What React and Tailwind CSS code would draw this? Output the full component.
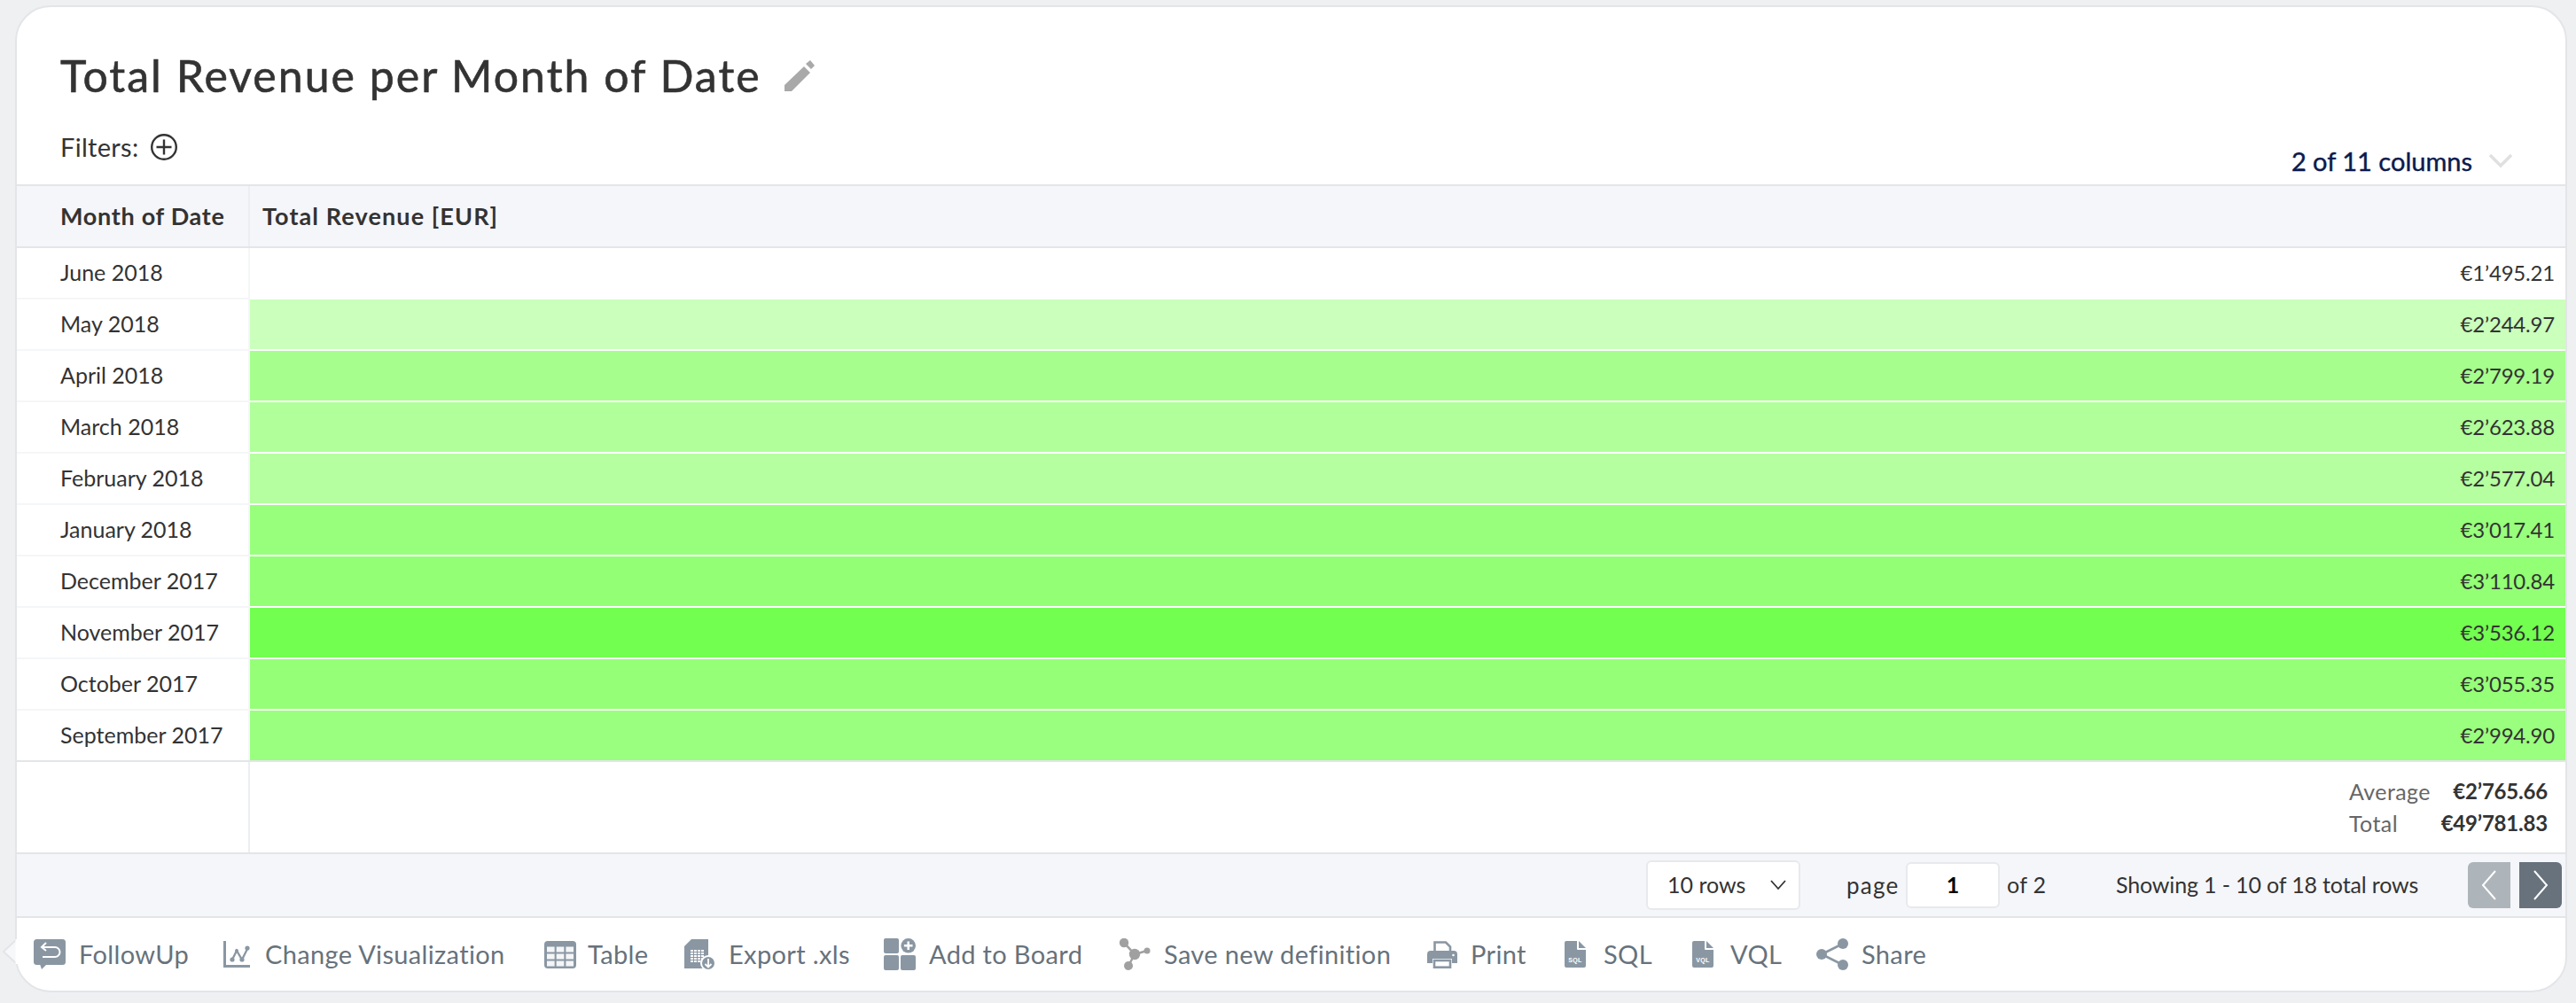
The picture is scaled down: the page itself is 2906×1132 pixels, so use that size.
import React from "react";

const rows = [
  ["June 2018", "€1’495.21", "bg-white"],
  ["May 2018", "€2’244.97", "bg-[#cbffbc]"],
  ["April 2018", "€2’799.19", "bg-[#a6ff8d]"],
  ["March 2018", "€2’623.88", "bg-[#b0ff9b]"],
  ["February 2018", "€2’577.04", "bg-[#b5ffa0]"],
  ["January 2018", "€3’017.41", "bg-[#98ff7c]"],
  ["December 2017", "€3’110.84", "bg-[#92ff75]"],
  ["November 2017", "€3’536.12", "bg-[#72ff50]"],
  ["October 2017", "€3’055.35", "bg-[#96ff78]"],
  ["September 2017", "€2’994.90", "bg-[#9aff7e]"],
];

const I = { fill: "#8a97a3" };

const fileIcon = (label) => (
  <svg width="24" height="30" viewBox="0 0 24 30">
    <path d="M2 0H14V9a1 1 0 0 0 1 1H24V28a2 2 0 0 1-2 2H2a2 2 0 0 1-2-2V2a2 2 0 0 1 2-2z" {...I} />
    <path d="M16 0l8 8h-8z" {...I} />
    <text x="12" y="23.500" textAnchor="middle" fontSize="7" fontWeight="700" fill="#fff" fontFamily="Liberation Sans, sans-serif">{label}</text>
  </svg>
);

const cells = [];
for (const y of [6.5, 14.5, 22.5]) for (const x of [3, 13.7, 24.4]) cells.push([x, y]);
const xls = [];
for (const y of [12, 15, 18, 21, 24]) for (const x of [7, 11, 15, 19]) xls.push([x, y]);

const tools = [
  ["FollowUp", "w-[214px] gap-[15px]",
    <svg width="36" height="34" viewBox="0 0 36 34">
      <rect width="36" height="29" rx="3.500" {...I} />
      <path d="M7 28h8l-6 6z" {...I} />
      <path d="M14 4L9 9l5 4M9 9h15a5.500 5.500 0 0 1 0 11H10" fill="none" stroke="#fff" strokeWidth="2" />
    </svg>],
  ["Change Visualization", "w-[362px] gap-[17px]",
    <svg width="30" height="30" viewBox="0 0 30 30">
      <path d="M1.500 0V28.500H30" fill="none" stroke="#8a97a3" strokeWidth="3" />
      <path d="M10 21l5-10 6 10 6-12" fill="none" stroke="#8a97a3" strokeWidth="2.300" />
      <circle cx="10" cy="21" r="2.600" {...I} /><circle cx="15" cy="11" r="2" {...I} /><circle cx="21" cy="21" r="2.600" {...I} /><circle cx="27" cy="8" r="2.600" {...I} />
    </svg>],
  ["Table", "w-[158px] gap-[13px]",
    <svg width="36" height="31" viewBox="0 0 36 31">
      <rect width="36" height="31" rx="4" {...I} />
      {cells.map(([x, y]) => <rect key={`${x}-${y}`} x={x} y={y} width="8.600" height="6" fill="#fff" opacity="0.9" />)}
    </svg>],
  ["Export .xls", "w-[225px] gap-[14px]",
    <svg width="36" height="35" viewBox="0 0 36 35">
      <path d="M8 0H27V33H0V8z" {...I} />
      {xls.map(([x, y]) => <rect key={`${x}-${y}`} x={x} y={y} width="3" height="2" fill="#fff" />)}
      <circle cx="27" cy="27" r="8" {...I} stroke="#fff" strokeWidth="2" />
      <path d="M27 22v9M23.500 28l3.500 3.500 3.500-3.500" fill="none" stroke="#fff" strokeWidth="1.800" />
    </svg>],
  ["Add to Board", "w-[265px] gap-[15px]",
    <svg width="36" height="36" viewBox="0 0 36 36">
      <rect width="17" height="17" rx="2" {...I} />
      <rect y="19" width="17" height="17" rx="2" {...I} />
      <rect x="19" y="19" width="17" height="17" rx="2" {...I} />
      <circle cx="27.700" cy="8.300" r="8.300" {...I} />
      <path d="M27.700 3.500v9.600M22.900 8.300h9.600" stroke="#fff" strokeWidth="2.500" />
    </svg>],
  ["Save new definition", "w-[348px] gap-[15px]",
    <svg width="36" height="36" viewBox="0 0 36 36">
      <path d="M6 5l12 13-7 13M18 18l14-4" fill="none" stroke="#a0a0a0" strokeWidth="2.500" />
      <circle cx="6" cy="5" r="5.200" fill="#a0a0a0" />
      <circle cx="18" cy="18" r="6.200" fill="#a0a0a0" />
      <circle cx="32" cy="14" r="3.500" fill="#a0a0a0" />
      <circle cx="11" cy="31" r="5" fill="#a0a0a0" />
    </svg>],
  ["Print", "w-[155px] gap-[15px]",
    <svg width="34" height="31" viewBox="0 0 34 31">
      <path d="M8.500 12V1.500H21l5 5V12" fill="none" stroke="#8a97a3" strokeWidth="2.600" />
      <path d="M4 11h26a4 4 0 0 1 4 4v10h-6v-5H6v5H0V15a4 4 0 0 1 4-4z" {...I} />
      <rect x="8" y="22" width="18" height="7.700" fill="none" stroke="#8a97a3" strokeWidth="2.600" />
      <circle cx="29.500" cy="16" r="1.300" fill="#fff" />
    </svg>],
  ["SQL", "w-[144px] gap-[20px]", fileIcon("SQL")],
  ["VQL", "w-[140px] gap-[19px]", fileIcon("VQL")],
  ["Share", "w-[130px] gap-[15px]",
    <svg width="36" height="36" viewBox="0 0 36 36">
      <path d="M30 6L6 18l24 12" fill="none" stroke="#8a97a3" strokeWidth="2.600" />
      <circle cx="30" cy="6" r="6" {...I} /><circle cx="6" cy="18" r="6" {...I} /><circle cx="30" cy="30" r="6" {...I} />
    </svg>],
];

export default function App() {
  return (
    <div className="h-[1132px] w-[2906px] overflow-hidden bg-[#eef0f2] pl-[17px] pr-[10px] pt-[6px] pb-[12px] font-['Lato',sans-serif]">
      <div className="relative flex h-full flex-col rounded-[40px] border-2 border-[#e3e5e8] bg-white">
        <div className="relative h-[200px] shrink-0">
          <div className="flex items-center pl-[49px] pt-[47px]">
            <h1 className="text-[50px] leading-[60px] tracking-[2px] text-[#333] [-webkit-text-stroke:0.6px_#333]">Total Revenue per Month of Date</h1>
            <svg className="ml-[26px]" width="34" height="35" viewBox="0 0 34 35" fill="#a9a9a9"><path d="M0 28L22 7l7 7L8 35H0zM24 4l5-4 5 6-4 4z" /></svg>
          </div>
          <div className="mt-[33px] flex items-center pl-[49px]">
            <span className="text-[29px] leading-[36px] tracking-[0.3px] text-[#333]">Filters:</span>
            <svg className="ml-[14px]" width="30" height="30" viewBox="0 0 30 30" fill="none" stroke="#333" strokeWidth="2.400"><circle cx="15" cy="15" r="13.800" /><path d="M15 6.500v17M6.500 15h17" /></svg>
          </div>
          <div className="absolute right-[60px] top-[156px] flex items-center">
            <span className="text-[29px] leading-[36px] text-[#0b1a4e] [-webkit-text-stroke:0.4px_#0b1a4e]">2 of 11 columns</span>
            <svg className="ml-[19px]" width="26" height="16" viewBox="0 0 26 16" fill="none" stroke="#e0e0e0" strokeWidth="3.500"><path d="M1 1l12 12L25 1" /></svg>
          </div>
        </div>

        <div className="flex h-[72px] shrink-0 border-y-2 border-[#e3e5e8] bg-[#f5f6fa] text-[27px] font-bold text-[#333]">
          <div className="flex w-[263px] shrink-0 items-center whitespace-nowrap border-r-2 border-[#eceef1] pl-[49px] tracking-[0.7px]">Month of Date</div>
          <div className="flex items-center pl-[14px] tracking-[1.1px]">Total Revenue [EUR]</div>
        </div>

        {rows.map(([m, v, c]) => (
          <div key={m} className="flex h-[58px] shrink-0 text-[25px] text-[#333]">
            <div className="flex w-[263px] shrink-0 items-center border-b-2 border-r-2 border-[#f5f6f7] pl-[49px]">{m}</div>
            <div className={`flex flex-1 items-center justify-end border-b-2 border-white pr-[12px] text-[24px] tracking-[-0.2px] ${c}`}>{v}</div>
          </div>
        ))}

        <div className="-mt-[2px] flex h-[106px] shrink-0 border-y-2 border-[#e3e5e8]">
          <div className="w-[263px] shrink-0 border-r-2 border-[#eceef1]" />
          <div className="flex flex-1 flex-col items-end justify-center gap-[6px] pr-[20px] text-[25px] leading-[30px]">
            <div className="flex w-[224px] justify-between"><span className="tracking-[0.4px] text-[#666]">Average</span><span className="text-[24px] font-bold tracking-[-0.2px] text-[#333]">€2’765.66</span></div>
            <div className="flex w-[224px] justify-between"><span className="tracking-[0.4px] text-[#666]">Total</span><span className="text-[24px] font-bold tracking-[-0.2px] text-[#333]">€49’781.83</span></div>
          </div>
        </div>

        <div className="flex h-[72px] shrink-0 items-center justify-end border-b-2 border-[#e3e5e8] bg-[#f5f6fa] pr-[4px] text-[25px] text-[#333]">
          <div className="mr-[52px] flex h-[56px] w-[174px] items-center justify-between rounded-[6px] border-2 border-[#e8e9ec] bg-white pl-[22px] pr-[14px]">
            <span>10 rows</span>
            <svg width="18" height="12" viewBox="0 0 18 12" fill="none" stroke="#333" strokeWidth="1.800"><path d="M1 1l8 9 8-9" /></svg>
          </div>
          <span className="mr-[5px] w-[62px] text-[26px] tracking-[1.2px]">page</span>
          <div className="mr-[8px] flex h-[52px] w-[106px] items-center justify-center rounded-[6px] border-2 border-[#e8e9ec] bg-white font-bold text-black">1</div>
          <span className="mr-[80px] w-[43px] whitespace-nowrap tracking-[0.3px]">of 2</span>
          <span className="mr-[57px] w-[340px] whitespace-nowrap tracking-[-0.15px]">Showing 1 - 10 of 18 total rows</span>
          <button className="mr-[10px] flex h-[52px] w-[48px] items-center justify-center rounded-l-[6px] bg-[#adb4ba]">
            <svg width="18" height="34" viewBox="0 0 18 34" fill="none" stroke="#fff" strokeWidth="2"><path d="M16 1L2 17l14 16" /></svg>
          </button>
          <button className="flex h-[52px] w-[48px] items-center justify-center rounded-r-[6px] bg-[#67727c]">
            <svg width="18" height="34" viewBox="0 0 18 34" fill="none" stroke="#fff" strokeWidth="2"><path d="M2 1l14 16L2 33" /></svg>
          </button>
        </div>

        <div className="flex flex-1 items-center pl-[19px] text-[29px] tracking-[0.35px] text-[#67727c]">
          {tools.map(([t, w, icon]) => (
            <div key={t} className={`flex shrink-0 items-center whitespace-nowrap ${w}`}>{icon}<span>{t}</span></div>
          ))}
        </div>

        <svg className="absolute left-[-16px] top-[1052px]" width="17" height="28" viewBox="0 0 17 28"><path d="M16 0L1 14l15 14z" fill="#f7f8f9" stroke="#e3e5e8" strokeWidth="2" /><path d="M16 0v28" stroke="#fff" strokeWidth="3" /></svg>
      </div>
    </div>
  );
}
